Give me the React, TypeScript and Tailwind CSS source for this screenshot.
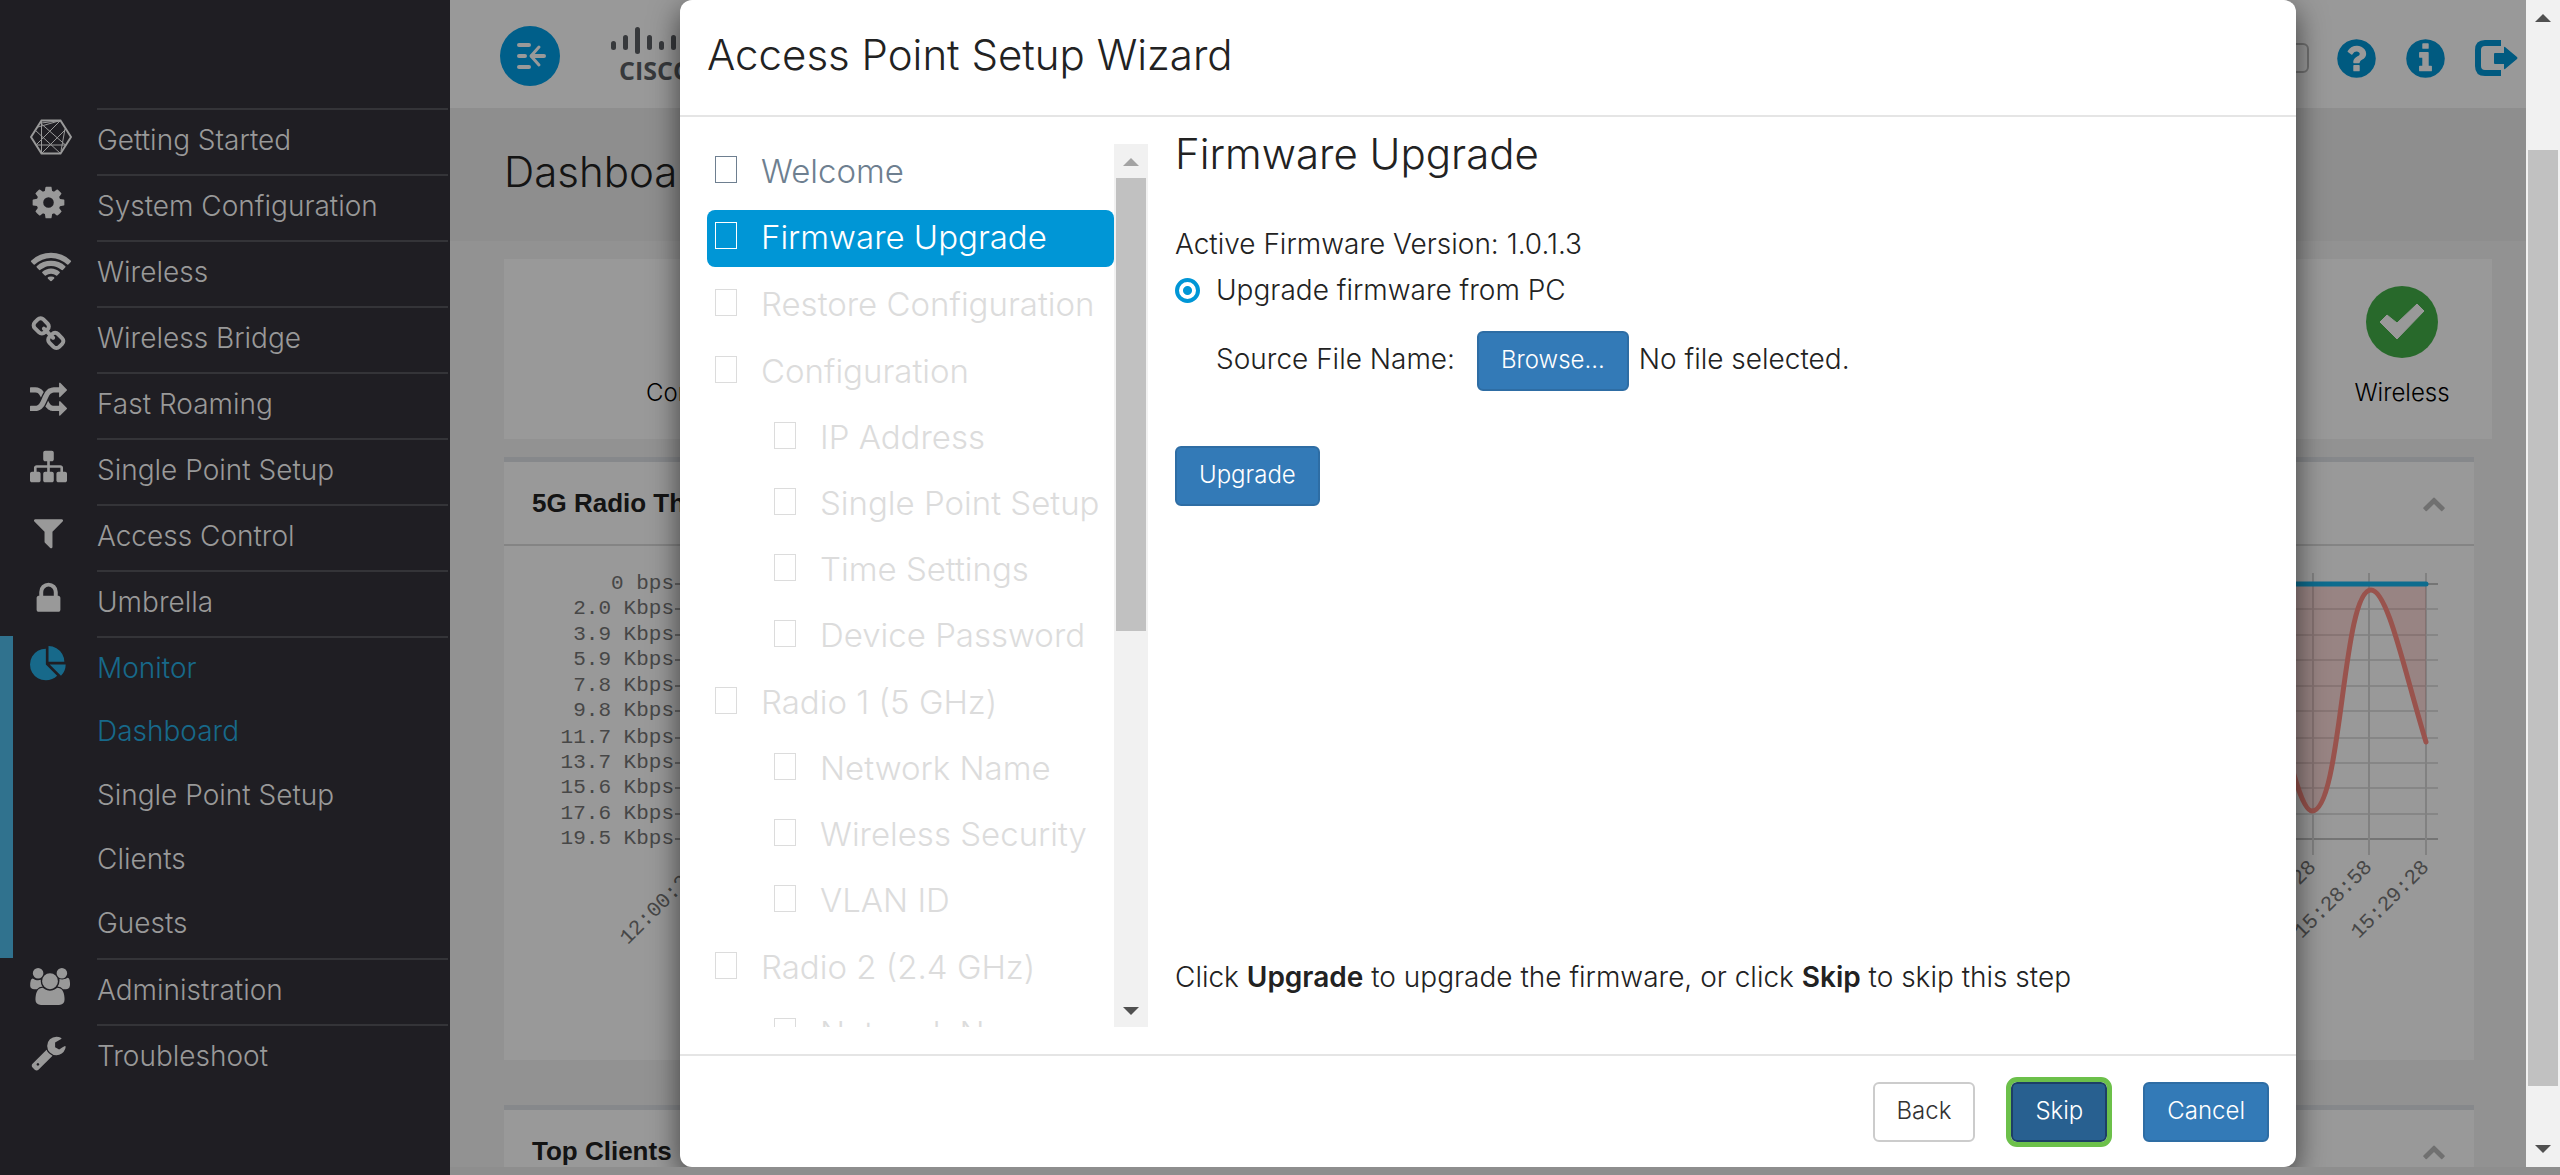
import type { ReactNode } from 'react';

const ICONS = {
  cog: 'M1152 896q0-106-75-181t-181-75-181 75-75 181 75 181 181 75 181-75 75-181zm512-109v222q0 12-8 23t-20 13l-185 28q-19 54-39 91 35 50 107 138 10 12 10 25t-9 23q-27 37-99 108t-94 71q-12 0-26-9l-138-108q-44 23-91 38-16 136-29 186-7 28-36 28h-222q-14 0-24.5-8.5t-11.5-21.5l-28-184q-49-16-90-37l-141 107q-10 9-25 9-14 0-25-11-126-114-165-168-7-10-7-23 0-12 8-23 15-21 51-66.5t54-70.5q-27-50-41-99l-183-27q-13-2-21-12.5t-8-23.5v-222q0-12 8-23t19-13l186-28q14-46 39-92-40-57-107-138-10-12-10-24 0-10 9-23 26-36 98.5-107.5t94.5-71.5q13 0 26 10l138 107q44-23 91-38 16-136 29-186 7-28 36-28h222q14 0 24.5 8.5t11.5 21.5l28 184q49 16 90 37l142-107q9-9 24-9 13 0 25 10 129 119 165 170 7 8 7 22 0 12-8 23-15 21-51 66.5t-54 70.5q26 50 41 98l183 28q13 2 21 12.5t8 23.5z',
  wifi: 'M1024 1523q-20 0-93-73.5t-73-93.5q0-32 62.5-54t103.5-22 103.5 22 62.5 54q0 20-73 93.5t-93 73.5zm270-271q-2 0-40-25t-101.5-50-128.5-25-128.5 25-101 50-40.5 25q-18 0-93.5-75t-75.5-93q0-13 10-23 78-77 196-121t233-44 233 44 196 121q10 10 10 23 0 18-75.5 93t-93.5 75zm273-272q-11 0-23-8-136-105-252-154.5t-268-49.5q-85 0-170.5 22t-149 53-113.5 62-79 53-31 22q-17 0-92-75t-75-93q0-12 10-22 132-132 320-205t380-73 380 73 320 205q10 10 10 22 0 18-75 93t-92 75zm271-271q-11 0-22-9-179-157-371.5-236.5t-420.5-79.5-420.5 79.5-371.5 236.5q-11 9-22 9-17 0-92.5-75t-75.5-93q0-13 10-23 187-186 445-288t527-102 527 102 445 288q10 10 10 23 0 18-75.5 93t-92.5 75z',
  chain: 'M1520 1216q0-40-28-68l-208-208q-28-28-68-28-42 0-72 32 3 3 19 18.5t21.5 21.5 15 19 13 25.5 3.5 27.5q0 40-28 68t-68 28q-15 0-27.5-3.5t-25.5-13-19-15-21.5-21.5-18.5-19q-33 31-33 73 0 40 28 68l206 207q27 27 68 27 40 0 68-26l147-146q28-28 28-67zm-703-705q0-40-28-68l-206-207q-28-28-68-28-39 0-68 27l-147 146q-28 28-28 67 0 40 28 68l208 208q27 27 68 27 42 0 72-31-3-3-19-18.5t-21.5-21.5-15-19-13-25.5-3.5-27.5q0-40 28-68t68-28q15 0 27.5 3.5t25.5 13 19 15 21.5 21.5 18.5 19q33-31 33-73zm895 705q0 120-85 203l-147 146q-83 83-203 83-121 0-204-85l-206-207q-83-83-83-203 0-123 88-209l-88-88q-86 88-208 88-120 0-204-84l-208-208q-84-84-84-204t85-203l147-146q83-83 203-83 121 0 204 85l206 207q83 83 83 203 0 123-88 209l88 88q86-88 208-88 120 0 204 84l208 208q84 84 84 204z',
  random: 'M666 481q-60 92-137 273-22-45-37-72.5t-40.5-63.5-51-56.5-63-35-81.5-14.5h-224q-14 0-23-9t-9-23v-192q0-14 9-23t23-9h224q250 0 410 225zm1126 799q0 14-9 23l-320 320q-9 9-23 9-13 0-22.5-9.5t-9.5-22.5v-192q-32 0-85 .5t-81 1-73-1-71-5-64-10.5-63-18.5-58-28.5-59-40-55-53.5-56-69.5q59-93 136-273 22 45 37 72.5t40.5 63.5 51 56.5 63 35 81.5 14.5h256v-192q0-14 9-23t23-9q12 0 24 10l319 319q9 9 9 23zm0-896q0 14-9 23l-320 320q-9 9-23 9-13 0-22.5-9.5t-9.5-22.5v-192h-256q-48 0-87 15t-69 45-51 61.5-45 77.5q-32 62-78 171-29 66-49.5 111t-54 105-64 100-74 83-90 68.5-106.5 42-128 16.5h-224q-14 0-23-9t-9-23v-192q0-14 9-23t23-9h224q48 0 87-15t69-45 51-61.5 45-77.5q32-62 78-171 29-66 49.5-111t54-105 64-100 74-83 90-68.5 106.5-42 128-16.5h256v-192q0-14 9-23t23-9q12 0 24 10l319 319q9 9 9 23z',
  sitemap: 'M1792 1248v320q0 40-28 68t-68 28h-320q-40 0-68-28t-28-68v-320q0-40 28-68t68-28h96v-192h-512v192h96q40 0 68 28t28 68v320q0 40-28 68t-68 28h-320q-40 0-68-28t-28-68v-320q0-40 28-68t68-28h96v-192h-512v192h96q40 0 68 28t28 68v320q0 40-28 68t-68 28h-320q-40 0-68-28t-28-68v-320q0-40 28-68t68-28h96v-192q0-52 38-90t90-38h512v-192h-96q-40 0-68-28t-28-68v-320q0-40 28-68t68-28h320q40 0 68 28t28 68v320q0 40-28 68t-68 28h-96v192h512q52 0 90 38t38 90v192h96q40 0 68 28t28 68z',
  filter: 'M1595 295q17 41-14 70l-493 493v742q0 42-39 59-13 5-25 5-27 0-45-19l-256-256q-19-19-19-45v-486l-493-493q-31-29-14-70 17-39 59-39h1280q42 0 59 39z',
  lock: 'M640 768h512v-192q0-106-75-181t-181-75-181 75-75 181v192zm832 96v576q0 40-28 68t-68 28h-960q-40 0-68-28t-28-68v-576q0-40 28-68t68-28h32v-192q0-184 132-316t316-132 316 132 132 316v192h32q40 0 68 28t28 68z',
  pie: 'M768 890l546 546q-106 108-247.5 168t-298.5 60q-209 0-385.5-103t-279.5-279.5-103-385.5 103-385.5 279.5-279.5 385.5-103v762zm187 6h773q0 157-60 298.5t-168 247.5zm709-128h-768v-768q209 0 385.5 103t279.5 279.5 103 385.5z',
  users: 'M593 896q-162 5-265 128h-134q-82 0-138-40.5t-56-118.5q0-353 124-353 6 0 43.5 21t97.5 42.5 119 21.5q67 0 133-23-5 37-5 66 0 159 93 293zm1071 637q0 120-73 189.5t-194 69.5h-874q-121 0-194-69.5t-73-189.5q0-53 3.5-103.5t14-109 26.5-108.5 43-97.5 62-81 85.5-53.5 111.5-20q10 0 43 21.5t73 48 107 48 135 21.5 135-21.5 107-48 73-48 43-21.5q61 0 111.5 20t85.5 53.5 62 81 43 97.5 26.5 108.5 14 109 3.5 103.5zm-1024-1277q0 106-75 181t-181 75-181-75-75-181 75-181 181-75 181 75 75 181zm704 384q0 159-112.5 271.5t-271.5 112.5-271.5-112.5-112.5-271.5 112.5-271.5 271.5-112.5 271.5 112.5 112.5 271.5zm576 225q0 78-56 118.5t-138 40.5h-134q-103-123-265-128 93-134 93-293 0-29-5-66 66 23 133 23 59 0 119-21.5t97.5-42.5 43.5-21q124 0 124 353zm-128-609q0 106-75 181t-181 75-181-75-75-181 75-181 181-75 181 75 75 181z',
  wrench: 'M448 1472q0-26-19-45t-45-19-45 19-19 45 19 45 45 19 45-19 19-45zm644-420l-682 682q-37 37-90 37-52 0-91-37l-106-108q-38-36-38-90 0-53 38-91l681-681q39 98 114.5 173.5t173.5 114.5zm634-435q0 39-23 106-47 134-164.5 217.5t-258.5 83.5q-185 0-316.5-131.5t-131.5-316.5 131.5-316.5 316.5-131.5q58 0 121.5 16.5t107.5 46.5q16 11 16 28t-16 28l-293 169v224l193 107q5-3 79-48.5t135.5-81 70.5-35.5q15 0 23.5 10t8.5 25z',
  chevronUp: 'M1683 1331l-166 165q-19 19-45 19t-45-19l-531-531-531 531q-19 19-45 19t-45-19l-166-165q-19-19-19-45.5t19-45.5l742-741q19-19 45-19t45 19l742 741q19 19 19 45.5t-19 45.5z',
  question: 'M1024 1376v-192q0-14-9-23t-23-9h-192q-14 0-23 9t-9 23v192q0 14 9 23t23 9h192q14 0 23-9t9-23zm256-672q0-88-55.5-163t-138.5-116-170-41q-243 0-371 213-15 24 8 42l132 100q7 6 19 6 16 0 25-12 53-68 86-92 34-24 86-24 48 0 85.5 26t37.5 59q0 38-20 61t-68 45q-63 28-115.5 86.5t-52.5 125.5v36q0 14 9 23t23 9h192q14 0 23-9t9-23q0-19 21.5-49.5t54.5-49.5q32-18 49-28.5t46-35 44.5-48 28-60.5 12.5-81zm384 192q0 209-103 385.5t-279.5 279.5-385.5 103-385.5-103-279.5-279.5-103-385.5 103-385.5 279.5-279.5 385.5-103 385.5 103 279.5 279.5 103 385.5z',
  info: 'M1152 1376v-160q0-14-9-23t-23-9h-96v-512q0-14-9-23t-23-9h-320q-14 0-23 9t-9 23v160q0 14 9 23t23 9h96v320h-96q-14 0-23 9t-9 23v160q0 14 9 23t23 9h448q14 0 23-9t9-23zm-128-896v-160q0-14-9-23t-23-9h-192q-14 0-23 9t-9 23v160q0 14 9 23t23 9h192q14 0 23-9t9-23zm640 416q0 209-103 385.5t-279.5 279.5-385.5 103-385.5-103-279.5-279.5-103-385.5 103-385.5 279.5-279.5 385.5-103 385.5 103 279.5 279.5 103 385.5z',
};

type IconName = keyof typeof ICONS;

function Icon({ name, className, width = 1792 }: { name: IconName; className?: string; width?: number }) {
  return (
    <svg viewBox={`0 0 ${width} 1792`} className={className} fill="currentColor" aria-hidden="true">
      <path d={ICONS[name]} />
    </svg>
  );
}

function HexIcon() {
  return (
    <svg viewBox="0 0 42 38" className="h-[38px] w-[42px]" fill="none" stroke="currentColor" aria-hidden="true">
      <path d="M11.5 2.5h19L41 19 30.5 35.5h-19L1 19z" strokeWidth="2" />
      <path
        d="M11.500 2.500v33M11.500 6l24 21M30.500 2.500L6 27M5 12l25.500 23.500M36 11L11.500 35.500M8 9l22.500-6.500M35 11l-4 22M6 27h30M11.500 5l19-2.500"
        strokeWidth="1"
      />
    </svg>
  );
}

const menu: { label: string; icon: ReactNode }[] = [
  { label: 'Getting Started', icon: <HexIcon /> },
  { label: 'System Configuration', icon: <Icon name="cog" className="size-[37px]" /> },
  { label: 'Wireless', icon: <Icon name="wifi" width={2048} className="h-[37px] w-[42px]" /> },
  { label: 'Wireless Bridge', icon: <Icon name="chain" className="size-[37px]" /> },
  { label: 'Fast Roaming', icon: <Icon name="random" className="size-[37px]" /> },
  { label: 'Single Point Setup', icon: <Icon name="sitemap" className="size-[37px]" /> },
  { label: 'Access Control', icon: <Icon name="filter" className="size-[37px]" /> },
  { label: 'Umbrella', icon: <Icon name="lock" className="size-[37px]" /> },
];

function MenuRow({ label, icon, active }: { label: string; icon: ReactNode; active?: boolean }) {
  return (
    <a href="#" className={`flex h-[66px] pl-[30px] ${active ? 'text-[#17698a]' : 'text-[#999]'}`}>
      <span className="w-[67px] shrink-0 pt-2.5">{icon}</span>
      <span className="mr-0.5 flex-1 border-t-2 border-[#343438] pt-2.5 text-[28px] leading-[40px]">{label}</span>
    </a>
  );
}

function Sidebar() {
  return (
    <aside className="w-[450px] shrink-0 bg-[#1f1e23] pt-[108px]">
      <nav>
        {menu.map((item) => (
          <MenuRow key={item.label} {...item} />
        ))}
        <div className="relative">
          <span className="absolute inset-y-0 left-0 w-[13px] bg-[#30728e]" />
          <MenuRow label="Monitor" icon={<Icon name="pie" className="size-[37px]" />} active />
          {['Dashboard', 'Single Point Setup', 'Clients', 'Guests'].map((label, i) => (
            <a
              key={label}
              href="#"
              className={`block h-16 pt-[9px] pl-[97px] text-[28px] leading-[40px] ${i === 0 ? 'text-[#17698a]' : 'text-[#999]'}`}
            >
              {label}
            </a>
          ))}
        </div>
        <MenuRow label="Administration" icon={<Icon name="users" width={1920} className="h-[37px] w-10" />} />
        <MenuRow label="Troubleshoot" icon={<Icon name="wrench" className="size-[37px]" />} />
      </nav>
    </aside>
  );
}

function Logo() {
  const bars = [9, 15, 27, 15, 9, 15, 27, 15, 9];
  return (
    <div className="text-[#5d5f64]">
      <svg viewBox="0 0 104 28" className="h-7 w-[104px]" aria-hidden="true">
        {bars.map((h, i) => (
          <rect key={i} x={i * 12} y={h > 20 ? 0 : 23 - h} width="5" height={h} rx="2.5" fill="currentColor" />
        ))}
      </svg>
      <p className="pl-2 font-['Open_Sans',sans-serif] text-[25px] leading-[30px] font-bold">CISCO</p>
    </div>
  );
}

function TopBar() {
  return (
    <header className="flex h-[108px] shrink-0 items-center bg-white pt-1 pr-2 pl-[50px]">
      <button aria-label="Collapse menu" className="size-[60px] rounded-full bg-[#009fe6]">
        <svg viewBox="0 0 60 60" fill="none" stroke="white" strokeWidth="4" strokeLinecap="round" aria-hidden="true">
          <path d="M19 19h10M19 30h6M19 41h10M32 30h12" />
          <path d="M39 21l-8 9 8 9" strokeWidth="3" strokeLinejoin="round" />
        </svg>
      </button>
      <div className="flex-1 pl-[51px]">
        <Logo />
      </div>
      <div className="flex items-center pt-1 text-[#0096d6]">
        <select aria-label="Language" className="mr-[25px] h-[30px] w-40 appearance-none rounded-md border-2 border-[#bbb] px-2 text-base text-black">
          <option>English</option>
        </select>
        <button aria-label="Help">
          <Icon name="question" className="size-[45px]" />
        </button>
        <button aria-label="About" className="ml-6">
          <Icon name="info" className="size-[45px]" />
        </button>
        <button aria-label="Log out" className="ml-[26px]">
          <svg viewBox="0 0 44 38" className="h-[38px] w-11" fill="currentColor" aria-hidden="true">
            <path d="M27 4H11q-7 0-7 7v16q0 7 7 7h16" fill="none" stroke="currentColor" strokeWidth="6" />
            <path d="M21 14h9V9q0-2 1-1l12 10q1 1 0 2L31 30q-1 1-1-1v-4h-9q-1 0-1-1v-9q0-1 1-1z" />
          </svg>
        </button>
      </div>
    </header>
  );
}

function PanelHeader({ title }: { title: string }) {
  return (
    <div className="flex h-[84px] items-center justify-between border-b-2 border-[#dcdcdc] px-7">
      <h2 className="font-['Liberation_Sans',sans-serif] text-[26px] font-bold text-[#222]">{title}</h2>
      <button aria-label="Collapse panel" className="text-[#bbb]">
        <Icon name="chevronUp" className="size-6" />
      </button>
    </div>
  );
}

const rates = ['0 bps', '2.0 Kbps', '3.9 Kbps', '5.9 Kbps', '7.8 Kbps', '9.8 Kbps', '11.7 Kbps', '13.7 Kbps', '15.6 Kbps', '17.6 Kbps', '19.5 Kbps'];
const rateY = [38, 63, 89, 114, 140, 165, 192, 217, 242, 268, 293];

function ThroughputChart() {
  return (
    <div className="flex justify-between">
      <svg viewBox="0 0 200 516" className="h-[516px] w-[200px]" aria-hidden="true">
        <g className="font-['Liberation_Mono',monospace] text-[21px]" fill="#777" textAnchor="end">
          {rates.map((rate, i) => (
            <text key={rate} x="170" y={rateY[i] + 5}>
              {rate}
            </text>
          ))}
          <text transform="translate(195 328) rotate(-45)">12:00:28</text>
        </g>
        {rateY.map((y) => (
          <path key={y} d={`M171 ${y}H200`} stroke="#aaa" strokeWidth="2" />
        ))}
      </svg>
      <svg viewBox="0 0 200 516" className="h-[516px] w-[200px]" aria-hidden="true">
        {rateY.map((y, i) => (
          <path key={y} d={`M0 ${y}H164`} stroke={i % 10 === 0 ? '#c4c4c4' : '#e0e0e0'} strokeWidth="2" />
        ))}
        <path d="M39 27V309M95 27V309M152 27V309" stroke="#d8d8d8" strokeWidth="2" />
        <path d="M0 38V150C16 220 28 265 38 265C68 265 68 44 97 44C114 44 131 128 152 196V38z" fill="#f44336" fillOpacity="0.18" />
        <path d="M0 150C16 220 28 265 38 265C68 265 68 44 97 44C114 44 131 128 152 196" fill="none" stroke="#ff8a80" strokeWidth="5" strokeLinecap="round" />
        <path d="M0 38H152" stroke="#17b4ed" strokeWidth="5" strokeLinecap="round" />
        <g className="font-['Liberation_Mono',monospace] text-[21px]" fill="#777" textAnchor="end">
          <text transform="translate(43 322) rotate(-45)">15:28:28</text>
          <text transform="translate(99 322) rotate(-45)">15:28:58</text>
          <text transform="translate(156 322) rotate(-45)">15:29:28</text>
        </g>
      </svg>
    </div>
  );
}

function Dashboard() {
  return (
    <main className="flex h-full flex-col overflow-hidden bg-[#f3f3f3] text-black">
      <TopBar />
      <div className="h-[133px] shrink-0 bg-[#ededed] pt-9 pl-[54px]">
        <h1 className="text-[42px] leading-[56px] text-[#222]">Dashboard</h1>
      </div>
      <section className="mt-[18px] mr-[34px] ml-[54px] flex h-[180px] shrink-0 justify-between bg-white text-[24px] leading-8">
        <p className="pt-[118px] pl-[142px]">Connected Clients</p>
        <div className="flex w-[180px] flex-col items-center pt-[27px]">
          <svg viewBox="0 0 72 72" className="size-[72px]" aria-hidden="true">
            <circle cx="36" cy="36" r="36" fill="#44b049" />
            <path d="M14 36l7-7 10 8 20-19 7 7-27 28z" fill="white" stroke="white" strokeWidth="1" strokeLinejoin="round" />
          </svg>
          <p className="mt-[19px]">Wireless</p>
        </div>
      </section>
      <section className="mt-[18px] mr-[52px] ml-[54px] h-[603px] shrink-0 border-t-[5px] border-[#dfe3e8] bg-white">
        <PanelHeader title="5G Radio Throughput" />
        <ThroughputChart />
      </section>
      <section className="mt-[45px] mr-[52px] ml-[54px] shrink-0 border-t-[5px] border-[#dfe3e8] bg-white">
        <PanelHeader title="Top Clients" />
      </section>
    </main>
  );
}

type Step = { label: string; done?: boolean; active?: boolean; children?: string[] };

const steps: Step[] = [
  { label: 'Welcome', done: true },
  { label: 'Firmware Upgrade', active: true },
  { label: 'Restore Configuration' },
  { label: 'Configuration', children: ['IP Address', 'Single Point Setup', 'Time Settings', 'Device Password'] },
  { label: 'Radio 1 (5 GHz)', children: ['Network Name', 'Wireless Security', 'VLAN ID'] },
  { label: 'Radio 2 (2.4 GHz)', children: ['Network Name'] },
];

function StepLink({ label, className }: { label: string; className: string }) {
  return (
    <a href="#" className={`flex h-[57px] items-start pt-[5px] text-[33px] leading-[44px] whitespace-nowrap ${className}`}>
      <span className="mt-[7px] mr-6 h-[27px] w-[22px] shrink-0 border border-current" />
      {label}
    </a>
  );
}

function StepList() {
  return (
    <ul className="flex min-w-0 flex-1 flex-col gap-[9px]">
      {steps.map((step) => (
        <li key={step.label} className={step.done ? '' : 'mb-px'}>
          <StepLink
            label={step.label}
            className={`rounded-lg pl-2 ${step.active ? 'bg-[#0096d6] text-white' : step.done ? 'text-[#6e7f90]' : 'text-[#dcdcdc]'}`}
          />
          {step.children && (
            <ul className="mt-[9px] flex flex-col gap-[9px]">
              {step.children.map((child) => (
                <li key={child}>
                  <StepLink label={child} className="pl-[67px] text-[#dcdcdc]" />
                </li>
              ))}
            </ul>
          )}
        </li>
      ))}
    </ul>
  );
}

function Arrow({ down, className = '' }: { down?: boolean; className?: string }) {
  return (
    <svg viewBox="0 0 16 8" className={`h-2 w-4 shrink-0 ${className}`} fill="currentColor" aria-hidden="true">
      <path d={down ? 'M0 0h16L8 8z' : 'M0 8h16L8 0z'} />
    </svg>
  );
}

const button = 'h-[60px] rounded-md border-2 px-[22px] pb-0.5 text-[24px]';
const primary = 'border-[#2e6da4] bg-[#337ab7] text-white';

function WizardDialog() {
  return (
    <div
      role="dialog"
      aria-labelledby="wizard-title"
      className="flex h-full w-full max-w-[1616px] flex-col rounded-xl bg-white text-[#222] shadow-[0_10px_30px_rgba(0,0,0,0.6)]"
    >
      <div className="h-[117px] shrink-0 border-b-2 border-[#e5e5e5] pt-[27px] pl-[27px]">
        <h2 id="wizard-title" className="text-[42px] leading-[56px]">
          Access Point Setup Wizard
        </h2>
      </div>
      <div className="flex min-h-0 flex-1 pb-[27px] pl-[27px]">
        <div className="mt-[27px] flex w-[441px] shrink-0 overflow-hidden">
          <StepList />
          <div className="flex w-[34px] flex-col items-center bg-[#f1f1f1] pt-3.5 pb-3">
            <Arrow className="text-[#a3a3a3]" />
            <div className="mt-3 h-[453px] w-[30px] bg-[#c1c1c1]" />
            <div className="flex-1" />
            <Arrow down className="text-[#505050]" />
          </div>
        </div>
        <div className="flex flex-1 flex-col items-start pt-[9px] pl-[27px] text-[28px] leading-[46px]">
          <h3 className="text-[42px] leading-[56px]">Firmware Upgrade</h3>
          <p className="mt-[39px]">Active Firmware Version: 1.0.1.3</p>
          <label className="flex items-center gap-4">
            <input
              type="radio"
              name="source"
              defaultChecked
              className="size-[25px] appearance-none rounded-full border-4 border-[#0096d6] bg-[radial-gradient(circle,#0096d6_4px,white_5px)]"
            />
            Upgrade firmware from PC
          </label>
          <div className="mt-[18px] flex items-center pl-[41px]">
            <span className="pb-1">Source File Name:</span>
            <button className={`mr-2.5 ml-[22px] ${button} ${primary}`}>Browse...</button>
            <span className="pb-1">No file selected.</span>
          </div>
          <button className={`mt-[55px] ${button} ${primary}`}>Upgrade</button>
          <p className="mt-auto mb-[27px]">
            Click <b className="font-semibold">Upgrade</b> to upgrade the firmware, or click <b className="font-semibold">Skip</b> to skip this step
          </p>
        </div>
      </div>
      <div className="flex h-[113px] shrink-0 justify-end gap-9 border-t-2 border-[#e5e5e5] pt-[26px] pr-[27px]">
        <button className={`${button} border-[#ccc] bg-white text-[#333]`}>Back</button>
        <button className={`${button} border-[#1d3f66] bg-[#286090] text-white outline-[5px] outline-[#6cc04a]`}>Skip</button>
        <button className={`${button} ${primary}`}>Cancel</button>
      </div>
    </div>
  );
}

export default function App() {
  return (
    <div className="flex h-screen overflow-hidden font-['Inter','Liberation_Sans',sans-serif] font-light">
      <Sidebar />
      <div className="flex min-w-0 flex-1 flex-col">
        <div className="flex min-h-0 flex-1">
          <div className="relative min-w-0 flex-1 overflow-hidden">
            <Dashboard />
            <div className="absolute inset-0 flex justify-center bg-black/40">
              <WizardDialog />
            </div>
          </div>
          <div className="flex w-[34px] shrink-0 flex-col items-center bg-[#f1f1f1] py-3.5 text-[#505050]">
            <Arrow />
            <div className="mt-32 h-[936px] w-[30px] bg-[#c1c1c1]" />
            <div className="flex-1" />
            <Arrow down />
          </div>
        </div>
        <div className="h-2 shrink-0 bg-[#8e8e8e]" />
      </div>
    </div>
  );
}
